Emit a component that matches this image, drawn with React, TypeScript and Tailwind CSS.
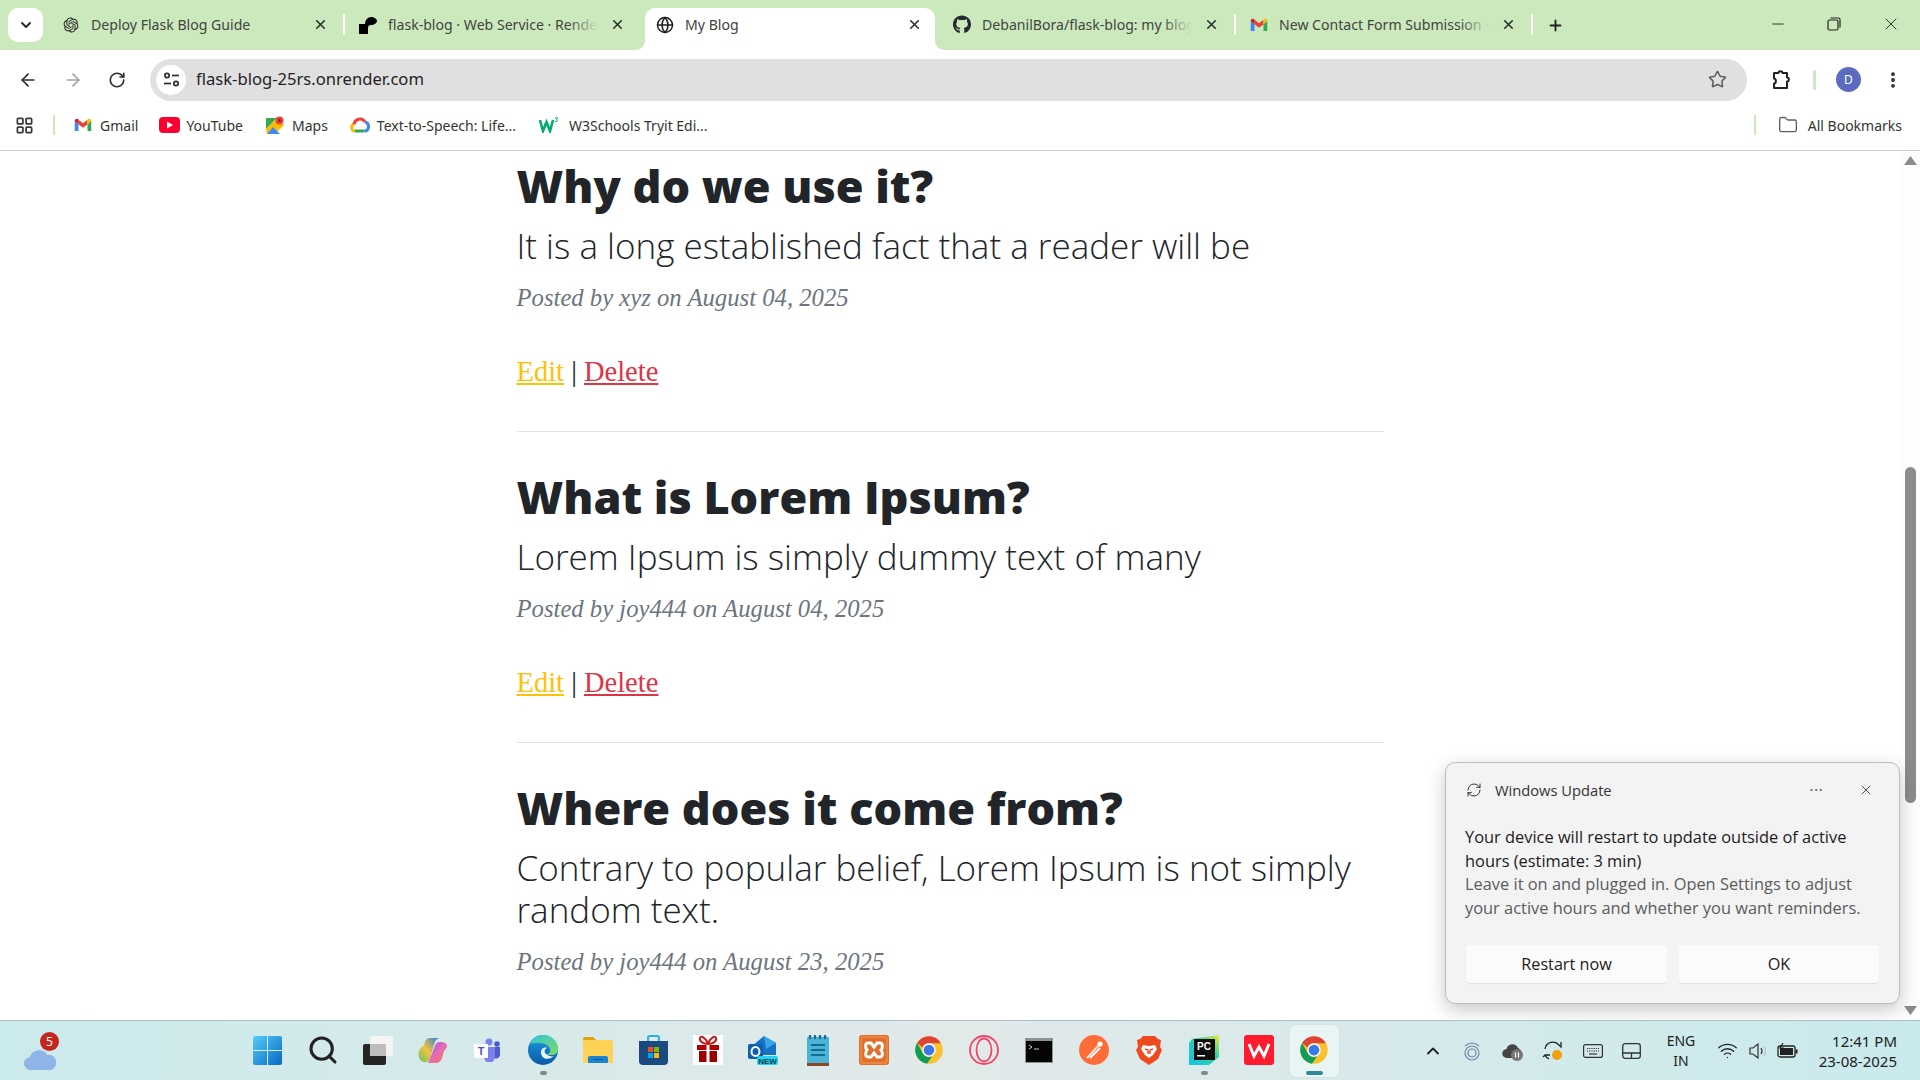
import React from "react";
import { FaGithub } from "react-icons/fa";
import { RiOpenaiFill } from "react-icons/ri";
import { ArrowLeft, ArrowRight, RotateCw, Star, MoreVertical, ChevronDown, ChevronUp, X, Plus, Minus, Globe, Folder, LayoutGrid, RefreshCw, Ellipsis, Search, Wifi } from "lucide-react";

const ui = "font-['Noto_Sans','Open_Sans',sans-serif]";

const Chrome = ({ s = 28 }: { s?: number }) => (
  <svg width={s} height={s} viewBox="0 0 24 24">
    <circle cx="12" cy="12" r="11" fill="#fbc02d" />
    <path d="M2.5 6.4A11 11 0 0 1 21.5 6.5H12A5.5 5.5 0 0 0 6.9 10Z" fill="#db4437" />
    <path d="M2.5 6.4L7.2 14.7A5.5 5.5 0 0 0 14.5 17L10.4 22.9A11 11 0 0 1 2.5 6.4Z" fill="#0f9d58" />
    <circle cx="12" cy="12" r="5.4" fill="#fff" />
    <circle cx="12" cy="12" r="4.3" fill="#3b78e7" />
  </svg>
);

const Gmail = ({ s = 18 }: { s?: number }) => (
  <svg width={s} height={s} viewBox="0 0 24 24">
    <path d="M1 6v14h5V11z" fill="#4285f4" />
    <path d="M23 6v14h-5V11z" fill="#34a853" />
    <path d="M6 11l6 4.5 6-4.5V5l-6 4.5L6 5z" fill="#ea4335" />
    <path d="M1 6.5C1 3.500 4.300 2.700 6 4.500V11z" fill="#c5221f" />
    <path d="M23 6.500C23 3.500 19.700 2.700 18 4.500V11z" fill="#fbbc04" />
  </svg>
);

const RenderIcon = () => (
  <svg width="18" height="18" viewBox="0 0 18 18">
    <path d="M0 18V8h6c0-4 3-7 6-7 3 0 6 2 6 4s-3 4-6 4c-2 0-3 1-3 3v6z" fill="#000" />
  </svg>
);

function Tab({ icon, title, active, sep, tone = "#41453e" }: { icon: React.ReactNode; title: string; active?: boolean; sep?: boolean; tone?: string }) {
  return (
    <div className="relative w-[297px] h-[42px] mt-[8px] flex items-center shrink-0 pb-[9px]">
      {active && (
        <>
          <div className="absolute left-[3px] right-[4px] top-0 bottom-0 bg-white rounded-t-[10px]" />
          <svg className="absolute left-[-7px] bottom-0" width="10" height="10" viewBox="0 0 10 10"><path d="M0 10C6 10 10 6 10 0V10Z" fill="#fff" /></svg>
          <svg className="absolute right-[-6px] bottom-0" width="10" height="10" viewBox="0 0 10 10"><path d="M10 10C4 10 0 6 0 0V10Z" fill="#fff" /></svg>
        </>
      )}
      <div className="relative ml-[14px] w-[18px] h-[18px] flex items-center justify-center shrink-0">{icon}</div>
      <div className="relative ml-[11px] w-[210px] overflow-hidden whitespace-nowrap text-[14.1px] leading-[20px]" style={{ color: tone }}>
        {title}
        {title.length > 27 && <div className="absolute right-0 top-0 h-full w-[30px] bg-gradient-to-r from-transparent to-[#cce9be]" />}
      </div>
      <X className="relative ml-[12px] text-[#2c2f2a]" size={15} strokeWidth={2.6} />
      {sep && <div className="absolute right-[0px] top-[6px] h-[21px] w-[2px] bg-white rounded" />}
    </div>
  );
}

function TitleBar() {
  return (
    <div className="h-[50px] bg-[#cce9be] flex items-start relative shrink-0">
      <div className="ml-[8px] mt-[8px] w-[35px] h-[34px] bg-white rounded-[10px] flex items-center justify-center">
        <ChevronDown size={16} strokeWidth={3} className="text-[#2c2f2a]" />
      </div>
      <div className="ml-[5px] flex">
        <Tab icon={<RiOpenaiFill size={20} className="text-[#222]" />} title="Deploy Flask Blog Guide" sep />
        <Tab icon={<RenderIcon />} title="flask-blog · Web Service · Render" />
        <Tab icon={<Globe size={18} className="text-[#1f1f1f]" />} title="My Blog" active tone="#3f423d" />
        <Tab icon={<FaGithub size={21} className="text-[#24292f]" />} title="DebanilBora/flask-blog: my blog" sep />
        <Tab icon={<Gmail />} title="New Contact Form Submission - Inbox" sep />
      </div>
      <Plus size={17} strokeWidth={2.6} className="ml-[14px] mt-[17px] text-[#222]" />
      <div className="ml-auto flex items-center h-[50px] pb-[2px]">
        <Minus size={18} strokeWidth={1.2} className="text-[#222] mr-[40px]" />
        <svg width="14" height="14" viewBox="0 0 14 14" className="mr-[40px]" fill="none" stroke="#222" strokeWidth="1.2"><rect x="1" y="3" width="10" height="10" rx="1.500" /><path d="M3.500 1h8a1.500 1.500 0 0 1 1.500 1.500v8" /></svg>
        <X size={20} strokeWidth={1.1} className="text-[#222] mr-[19px]" />
      </div>
    </div>
  );
}

function Toolbar() {
  return (
    <div className="h-[59px] bg-white rounded-t-[10px] flex items-center shrink-0 -mb-px relative">
      <div className="w-[150px] flex items-center shrink-0 pl-[18px] gap-[25px]">
        <ArrowLeft size={20} strokeWidth={2} className="text-[#2c2f2a]" />
        <ArrowRight size={20} strokeWidth={2} className="text-[#a3a5a2]" />
        <RotateCw size={18} strokeWidth={2.2} className="text-[#2c2f2a]" />
      </div>
      <div className="w-[1597px] h-[42px] rounded-full bg-[#e0e0e0] flex items-center shrink-0 pl-[6px] pr-[20px]">
        <div className="w-[30px] h-[30px] rounded-full bg-white flex items-center justify-center">
          <svg width="17" height="17" viewBox="0 0 17 17" fill="none" stroke="#2c2f2a" strokeWidth="1.700"><circle cx="4" cy="4.500" r="2.200" /><path d="M9 4.500h7" /><circle cx="13" cy="12.500" r="2.200" /><path d="M1 12.500h7" /></svg>
        </div>
        <span className="ml-[10px] text-[16.6px] text-[#1f2326]">flask-blog-25rs.onrender.com</span>
        <Star size={19} strokeWidth={2} className="ml-auto text-[#5f615e]" />
      </div>
      <svg width="20" height="20" viewBox="0 0 20 20" className="ml-[25px]" fill="none" stroke="#222" strokeWidth="2"><path d="M2 3h4.500c0-2.500 4-2.500 4 0H15v4.500c2.500 0 2.500 4 0 4V18H2v-4.500c2.500 0 2.500-5 0-5z" strokeLinejoin="round" /></svg>
      <div className="ml-[21px] w-[3px] h-[20px] bg-[#cce9be] rounded" />
      <div className="ml-[20px] w-[25px] h-[25px] rounded-full bg-[#5c6bc0] text-white text-[12px] flex items-center justify-center">D</div>
      <MoreVertical size={20} strokeWidth={2.6} className="ml-[22px] text-[#2c2f2a]" />
    </div>
  );
}

const Bookmark = ({ icon, label, ml, gap }: { icon: React.ReactNode; label: string; ml: number; gap: number }) => (
  <div className="flex items-center" style={{ marginLeft: ml }}>
    {icon}
    <span className="text-[14px] text-[#33362f] whitespace-nowrap" style={{ marginLeft: gap }}>{label}</span>
  </div>
);

function BookmarksBar() {
  return (
    <div className="h-[43px] bg-white border-b border-[#d0d0d0] flex items-center shrink-0 relative pl-[15px] pb-[8px]">
      <LayoutGrid size={19} strokeWidth={2.2} className="text-[#3a3a3a]" />
      <div className="ml-[19px] w-[2px] h-[20px] bg-[#cce9be]" />
      <Bookmark ml={19} gap={8} label="Gmail" icon={<Gmail />} />
      <Bookmark ml={21} gap={6} label="YouTube" icon={
        <svg width="21" height="16" viewBox="0 0 21 16"><rect width="21" height="16" rx="4" fill="#ff0033" /><path d="M8 4.500l6 3.500-6 3.500z" fill="#fff" /></svg>} />
      <Bookmark ml={23} gap={8} label="Maps" icon={
        <svg width="18" height="18" viewBox="0 0 18 18"><path d="M0 2h11L0 13z" fill="#34a853" /><path d="M0 13L11 2l7 7v0L9 18H1z" fill="#fbbc04" /><path d="M1 18l6-7 7 7z" fill="#4285f4" /><circle cx="13.500" cy="4.500" r="4" fill="#ea4335" /><circle cx="13.500" cy="4.500" r="1.500" fill="#8e1c14" /></svg>} />
      <Bookmark ml={22} gap={7} label="Text-to-Speech: Life..." icon={
        <svg width="20" height="16" viewBox="0 0 20 16" fill="none" strokeWidth="3"><path d="M5 14a3.500 3.500 0 0 1-1-6.800" stroke="#fbbc04" /><path d="M4 7.200C5 2 12 0 15 5" stroke="#ea4335" /><path d="M15 5c5 1 4.500 9-.5 9" stroke="#4285f4" /><path d="M5 14h9.500" stroke="#34a853" /></svg>} />
      <Bookmark ml={23} gap={10} label="W3Schools Tryit Edi..." icon={
        <svg width="20" height="16" viewBox="0 0 20 16" fill="none" stroke="#04aa6d" strokeWidth="2.600"><path d="M1 3l3 11 3.500-9L11 14l3-11" /><path d="M16 1h3l-1.500 1.500q1.500.5 0 2H16" strokeWidth="1" /></svg>} />
      <div className="ml-auto flex items-center pr-[18px]">
        <div className="w-[2px] h-[20px] bg-[#cce9be] mr-[22px]" />
        <Folder size={20} strokeWidth={1.6} className="text-[#5f615e]" />
        <span className="ml-[10px] text-[14px] text-[#33362f] whitespace-nowrap">All Bookmarks</span>
      </div>
    </div>
  );
}

function Post({ title, text, by, last }: { title: string; text: string; by: string; last?: boolean }) {
  return (
    <article className={last ? "" : "mb-[38px]"}>
      <h2 className="font-['Open_Sans',sans-serif] font-extrabold text-[45px] leading-[54px] text-[#212529]">{title}</h2>
      <p className="mt-[12px] font-['Open_Sans',sans-serif] font-light text-[35px] leading-[42px] text-[#212529]">{text}</p>
      <p className="mt-[14px] font-['Liberation_Serif',serif] italic text-[24.7px] leading-[34px] text-[#6c757d]">{by}</p>
      <div className="mt-[40px] font-['Liberation_Serif',serif] text-[28.5px] leading-[34px] text-[#212529]">
        <a className="text-[#ffc107] underline">Edit</a> | <a className="text-[#dc3545] underline">Delete</a>
      </div>
      {!last && <hr className="mt-[42px] border-t border-[#dfe1e3]" />}
    </article>
  );
}

function Page() {
  return (
    <div className="flex-1 min-h-0 flex bg-white relative overflow-hidden">
      <main className="flex-1 min-w-0 overflow-hidden pt-[8px]">
        <div className="w-[867px] mx-auto">
          <Post title="Why do we use it?" text="It is a long established fact that a reader will be" by="Posted by xyz on August 04, 2025" />
          <Post title="What is Lorem Ipsum?" text="Lorem Ipsum is simply dummy text of many" by="Posted by joy444 on August 04, 2025" />
          <Post last title="Where does it come from?" text="Contrary to popular belief, Lorem Ipsum is not simply random text." by="Posted by joy444 on August 23, 2025" />
        </div>
      </main>
      <div className="w-[20px] shrink-0 bg-[#fdfdfd] flex flex-col items-center pt-[5px] pb-[5px]">
        <svg width="13" height="9" viewBox="0 0 13 9"><path d="M6.500 0L13 9H0z" fill="#8b8b8b" /></svg>
        <div className="mt-[302px] w-[11px] h-[336px] rounded-full bg-[#8b8b8b]" />
        <svg className="mt-auto" width="13" height="9" viewBox="0 0 13 9"><path d="M6.500 9L13 0H0z" fill="#8b8b8b" /></svg>
      </div>
      <Toast />
    </div>
  );
}

function Toast() {
  return (
    <div className="absolute left-[1445px] top-[611px] w-[455px] h-[242px] bg-[#f3f3f3] border border-[#bdbdbd] rounded-[10px] shadow-[0_6px_18px_rgba(0,0,0,0.22)] px-[20px] font-['Open_Sans',sans-serif]">
      <div className="flex items-center h-[26px] mt-[14px]">
        <RefreshCw size={16} strokeWidth={1.5} className="text-[#333]" />
        <span className="ml-[13px] text-[14.7px] text-[#333]">Windows Update</span>
        <Ellipsis size={16} strokeWidth={1.2} className="ml-auto text-[#555]" />
        <X size={16} strokeWidth={1.3} className="ml-[34px] mr-[5px] text-[#333]" />
      </div>
      <div className="mt-[22px] -ml-px text-[16.4px] leading-[23.700px] text-[#1c1c1c]">
        <div className="whitespace-nowrap">Your device will restart to update outside of active</div>
        <div>hours (estimate: 3 min)</div>
        <div className="text-[#5c5c5c] whitespace-nowrap">Leave it on and plugged in. Open Settings to adjust</div>
        <div className="text-[#5c5c5c] whitespace-nowrap">your active hours and whether you want reminders.</div>
      </div>
      <div className="mt-[25px] flex gap-[12px]">
        <div className="w-[201px] h-[38px] rounded-[4px] bg-[#fbfbfb] shadow-[0_1px_1px_rgba(0,0,0,0.08)] flex items-center justify-center text-[16.2px] text-[#1c1c1c]">Restart now</div>
        <div className="w-[200px] h-[38px] rounded-[4px] bg-[#fbfbfb] shadow-[0_1px_1px_rgba(0,0,0,0.08)] flex items-center justify-center text-[16.2px] text-[#1c1c1c]">OK</div>
      </div>
    </div>
  );
}

const Slot = ({ children, dot, active }: { children: React.ReactNode; dot?: boolean; active?: boolean }) => (
  <div className="relative w-[55.1px] h-[52px] pb-[1px] flex items-center justify-center shrink-0">
    {active && <div className="absolute top-0 bottom-0 w-[49px] rounded-[5px] bg-[#e9f4f5] shadow-[0_0_1px_rgba(0,0,0,0.2)]" />}
    <div className="relative flex">{children}</div>
    {dot && <div className="absolute bottom-[2px] w-[7px] h-[4px] rounded-full bg-[#7e8b8c]" />}
    {active && <div className="absolute bottom-[2px] w-[17px] h-[4px] rounded-full bg-[#2a8a9a]" />}
  </div>
);

const icons = {
  start: (
    <svg width="29" height="29" viewBox="0 0 29 29"><defs><linearGradient id="w" x1="0" y1="0" x2="1" y2="1"><stop offset="0" stopColor="#56ccf8" /><stop offset="1" stopColor="#0668c4" /></linearGradient></defs><rect width="29" height="29" rx="2" fill="url(#w)" /><path d="M14.500 0v29M0 14.500h29" stroke="#d8f0f4" strokeWidth="1" /></svg>
  ),
  search: <Search size={32} strokeWidth={2.300} className="text-[#222]" />,
  task: (
    <svg width="30" height="29" viewBox="0 0 30 29"><rect x="0" y="8" width="23" height="21" rx="2" fill="#252525" /><rect x="7" y="0" width="23" height="20" rx="2" fill="#f4f4f4" /><rect x="7" y="8" width="16" height="12" fill="#bdbdbd" /></svg>
  ),
  copilot: (
    <svg width="29" height="29" viewBox="0 0 29 29"><defs><linearGradient id="c1" x1="0" y1="1" x2="1" y2="0"><stop offset="0" stopColor="#5ec46a" /><stop offset=".45" stopColor="#f2c43c" /><stop offset="1" stopColor="#2a7ce8" /></linearGradient><linearGradient id="c2" x1="0" y1="0" x2="1" y2="1"><stop offset="0" stopColor="#8a5ae6" /><stop offset=".5" stopColor="#e76bb4" /><stop offset="1" stopColor="#f47b3c" /></linearGradient></defs><path d="M11 2h10c-3 1-4 3-5 7l-4 13c-1 3-3 5-6 4-5-1-6-7-5-11 1-3 4-5 5-6q1-6 5-7z" fill="url(#c1)" /><path d="M10 27h9q4-1 5-5l2-7c2-3 3-3 3-5 0-3-3-4-7-4-3 0-4 1-5 4z" fill="url(#c2)" /></svg>
  ),
  teams: (
    <svg width="27" height="24" viewBox="0 0 27 24"><circle cx="15" cy="4" r="3.500" fill="#7b83eb" /><circle cx="23" cy="6" r="2.800" fill="#5059c9" /><path d="M19 9h7v8a4 4 0 0 1-6 3z" fill="#5059c9" /><path d="M9 9h12v10a5.500 5.500 0 0 1-11 0z" fill="#7b83eb" /><rect x="0" y="6" width="14" height="14" fill="#fff" /><text x="7" y="17" textAnchor="middle" fontFamily="Liberation Sans" fontWeight="700" fontSize="11" fill="#4b53bc">T</text></svg>
  ),
  edge: (
    <svg width="30" height="30" viewBox="0 0 30 30"><defs><linearGradient id="e1" x1="0" y1="0" x2="1" y2="1"><stop offset="0" stopColor="#2fc4d8" /><stop offset="1" stopColor="#7fdc64" /></linearGradient><linearGradient id="e2" x1="0" y1="0" x2="0" y2="1"><stop offset="0" stopColor="#1b9de2" /><stop offset="1" stopColor="#0a5aa8" /></linearGradient></defs><circle cx="15" cy="15" r="15" fill="url(#e2)" /><path d="M2 9C5 2 11 0 15 0c8 0 15 6 15 14 0 4-3 6-6 6h-6c3-1 5-3 4-6-1-4-6-6-11-6-4 0-7 0-9 1z" fill="url(#e1)" /><path d="M26 21c-2 2-7 4-10 2-3-2-4-6-2-9 1-1 4-2 5-1-3 1-3 4-1 6s6 3 8 2z" fill="#e8f4f6" /></svg>
  ),
  folder: (
    <svg width="30" height="26" viewBox="0 0 30 26"><path d="M0 2a2 2 0 0 1 2-2h8l3 3v3H0z" fill="#e3a20a" /><rect y="3" width="30" height="23" rx="1" fill="#fdd256" /><path d="M5 26v-5a2 2 0 0 1 2-2h16a2 2 0 0 1 2 2v5z" fill="#1b84d0" /><rect x="10" y="22" width="10" height="1" fill="#0b4d8c" /></svg>
  ),
  store: (
    <svg width="29" height="30" viewBox="0 0 29 30"><path d="M9 6V3a2 2 0 0 1 2-2h7a2 2 0 0 1 2 2v3" fill="none" stroke="#28b0e8" strokeWidth="2" /><path d="M0 6h29v20a4 4 0 0 1-4 4H4a4 4 0 0 1-4-4z" fill="#1a4a80" /><rect x="9" y="12" width="5" height="5" fill="#f25022" /><rect x="15" y="12" width="5" height="5" fill="#7fba00" /><rect x="9" y="18" width="5" height="5" fill="#00a4ef" /><rect x="15" y="18" width="5" height="5" fill="#ffb900" /></svg>
  ),
  gift: (
    <svg width="30" height="30" viewBox="0 0 30 30"><rect width="30" height="30" fill="#fff" /><path d="M15 9C10 9 6 6 7 3s6 0 8 6c2-6 7-9 8-6s-3 6-8 6z" fill="none" stroke="#c81e1e" strokeWidth="2" /><rect x="4" y="10" width="22" height="5" fill="#b00000" /><rect x="6" y="16" width="18" height="11" fill="#9e0000" /><rect x="13.500" y="10" width="3" height="17" fill="#fff" /></svg>
  ),
  outlook: (
    <svg width="30" height="30" viewBox="0 0 30 30"><path d="M4 11L16 1l12 7v12H4z" fill="#1572c4" /><path d="M16 1l12 7-10 6z" fill="#39a6e8" /><rect y="9" width="15" height="15" rx="2" fill="#0f5fb0" /><ellipse cx="7.500" cy="16.500" rx="4" ry="4.500" fill="none" stroke="#fff" strokeWidth="2" /><rect x="9" y="21" width="21" height="9" rx="2" fill="#22d3ee" /><text x="19.500" y="29" textAnchor="middle" fontFamily="Liberation Sans" fontWeight="700" fontSize="8" fill="#063a52">NEW</text></svg>
  ),
  notes: (
    <svg width="22" height="31" viewBox="0 0 22 31"><rect y="2" width="22" height="27" rx="1" fill="#4ab4d8" /><rect y="28" width="22" height="3" fill="#8c4a20" /><path d="M3 1v2M8 1v2M13 1v2M18 1v2" stroke="#1d6a88" strokeWidth="2.400" strokeLinecap="round" /><path d="M4 10h14M4 15h14M4 20h14" stroke="#146a90" strokeWidth="2" /></svg>
  ),
  xampp: (
    <svg width="30" height="30" viewBox="0 0 30 30"><rect width="30" height="30" rx="3" fill="#e0702a" /><rect x="2" y="2" width="26" height="26" rx="2" fill="none" stroke="#f49a5a" strokeWidth="1" /><path d="M9 8h3l3 4 3-4h3c3 0 3 5 1 7 2 2 2 7-1 7h-3l-3-4-3 4H9c-3 0-3-5-1-7-2-2-2-7 1-7z" fill="none" stroke="#fff" strokeWidth="3" /></svg>
  ),
  opera: (
    <svg width="30" height="30" viewBox="0 0 30 30" fill="none" stroke="#f0476a" strokeWidth="1.800"><circle cx="15" cy="15" r="14" /><ellipse cx="15" cy="15" rx="7.500" ry="11.500" /></svg>
  ),
  cmd: (
    <svg width="28" height="25" viewBox="0 0 28 25"><rect width="28" height="25" fill="#8e9295" /><rect x="1" y="3" width="26" height="21" fill="#050505" /><path d="M4 7l3 2-3 2M9 11h5" stroke="#ccc" strokeWidth="1" fill="none" /></svg>
  ),
  postman: (
    <svg width="30" height="30" viewBox="0 0 30 30"><circle cx="15" cy="15" r="15" fill="#ff6c37" /><path d="M8 23L19 11M11 23l10-10" stroke="#fff" strokeWidth="1.800" fill="none" /><circle cx="21" cy="9" r="2.600" fill="#fff" /></svg>
  ),
  brave: (
    <svg width="26" height="30" viewBox="0 0 26 30"><path d="M7 1h12l3 3 3 1-1 7 2 3-4 9-9 6-9-6-4-9 2-3-1-7 3-1z" fill="#ee4a1d" /><path d="M7 10l6 1 6-1 2 4-4 6-4 3-4-3-4-6z" fill="#fff" /><path d="M9 14l3 1v3h2v-3l3-1" stroke="#ee4a1d" strokeWidth="1.400" fill="none" /></svg>
  ),
  pycharm: (
    <svg width="30" height="30" viewBox="0 0 30 30"><defs><linearGradient id="p" x1="0" y1="1" x2="1" y2="0"><stop offset="0" stopColor="#18c0ee" /><stop offset=".6" stopColor="#2ed3a0" /><stop offset="1" stopColor="#f3e63c" /></linearGradient></defs><path d="M3 4L30 0v22L20 30H0V8z" fill="url(#p)" /><rect x="5" y="4" width="21" height="21" fill="#0b0b0b" /><text x="8" y="15" fontFamily="Liberation Sans" fontWeight="700" fontSize="10" fill="#fff">PC</text><rect x="8" y="20" width="8" height="1.500" fill="#fff" /></svg>
  ),
  wps: (
    <svg width="30" height="30" viewBox="0 0 30 30"><rect width="30" height="30" rx="3" fill="#ff1b2d" /><path d="M5 9l5 12 5-9 5 9 5-12" fill="none" stroke="#fff" strokeWidth="3" /></svg>
  ),
};

function Taskbar() {
  return (
    <footer className="h-[60px] shrink-0 border-t border-[#a9c0c4] bg-gradient-to-r from-[#cbeaec] via-[#e2e9e9] to-[#c9eaed] flex items-center relative z-10">
      <div className="absolute left-[24px] top-[12px]">
        <svg width="34" height="24" viewBox="0 0 34 24" className="mt-[13px]"><path d="M7 24a6.500 6.500 0 0 1-1-13c2-8 14-9 17-2 6-1 10 4 9 9-1 4-3 6-7 6z" fill="#8fb5e8" /></svg>
        <div className="absolute left-[16px] top-[-1px] w-[19px] h-[19px] rounded-full bg-[#c4261d] text-white text-[12px] flex items-center justify-center">5</div>
      </div>
      <div className="ml-[240px] flex items-center">
        <Slot>{icons.start}</Slot>
        <Slot>{icons.search}</Slot>
        <Slot>{icons.task}</Slot>
        <Slot>{icons.copilot}</Slot>
        <Slot>{icons.teams}</Slot>
        <Slot dot>{icons.edge}</Slot>
        <Slot>{icons.folder}</Slot>
        <Slot>{icons.store}</Slot>
        <Slot>{icons.gift}</Slot>
        <Slot>{icons.outlook}</Slot>
        <Slot>{icons.notes}</Slot>
        <Slot>{icons.xampp}</Slot>
        <Slot><Chrome s={30} /></Slot>
        <Slot>{icons.opera}</Slot>
        <Slot>{icons.cmd}</Slot>
        <Slot>{icons.postman}</Slot>
        <Slot>{icons.brave}</Slot>
        <Slot dot>{icons.pycharm}</Slot>
        <Slot>{icons.wps}</Slot>
        <Slot active><Chrome s={30} /></Slot>
      </div>
      <div className="absolute left-[1423px] top-0 h-full flex items-center text-[#222]">
        <ChevronUp size={20} strokeWidth={2.200} />
        <svg width="18" height="20" viewBox="0 0 18 20" fill="none" stroke="#6f87a8" strokeWidth="1.200" className="ml-[20px]"><circle cx="9" cy="12" r="7" /><circle cx="9" cy="12" r="4" /><path d="M2 5q7-6 14 0" /></svg>
        <svg width="22" height="20" viewBox="0 0 22 20" className="ml-[21px]"><path d="M5 17a4.500 4.500 0 0 1-.5-9C6 2 14 2 16 7q3 1 3 4H12v6z" fill="#444" /><circle cx="15" cy="14" r="6" fill="#777" /><path d="M13.500 11.500v5M16.500 11.500v5" stroke="#fff" strokeWidth="1.200" /></svg>
        <svg width="22" height="22" viewBox="0 0 22 22" fill="none" stroke="#222" strokeWidth="1.300" className="ml-[18px]"><path d="M3 9a8 8 0 0 1 14-4l2 2V2" /><path d="M7 19a8 8 0 0 1-4-4l-2 2M3 15h5" /><circle cx="15" cy="15" r="5" fill="#f59e0b" stroke="none" /></svg>
        <svg width="20" height="14" viewBox="0 0 20 14" fill="none" stroke="#333" strokeWidth="1.200" className="ml-[19px]"><rect x=".6" y=".6" width="18.800" height="12.800" rx="2" /><path d="M4 4.500h12M4 7h12" strokeDasharray="1.200 1" /><path d="M6 10h8" /></svg>
        <svg width="19" height="16" viewBox="0 0 19 16" fill="none" stroke="#333" strokeWidth="1.300" className="ml-[19px]"><rect x=".7" y=".7" width="17.600" height="14.600" rx="2.500" /><path d="M1 10h17M9.500 10v5" /></svg>
      </div>
      <div className="absolute left-[1660px] top-0 h-full w-[42px] flex flex-col justify-center items-center text-[14px] leading-[20px] text-[#222]">
        <span>ENG</span><span>IN</span>
      </div>
      <div className="absolute left-[1717px] top-0 h-full flex items-center text-[#222]">
        <Wifi size={21} strokeWidth={1.500} />
        <svg width="22" height="16" viewBox="0 0 22 16" fill="none" stroke="#333" strokeWidth="1.200" className="ml-[11px]"><path d="M1 5h3l5-4v14l-5-4H1z" /><path d="M12 5q2 3 0 6" /><path d="M15 3q3 5 0 10" stroke="#b5c5c8" /></svg>
        <svg width="21" height="16" viewBox="0 0 21 16" className="ml-[6px]"><rect x="1" y="3" width="17" height="11" rx="2" fill="none" stroke="#222" strokeWidth="1.300" /><rect x="3" y="5" width="13" height="7" fill="#222" /><rect x="18.500" y="6.500" width="2" height="4" fill="#222" /><path d="M6 0L3 5h3L4 8" fill="none" stroke="#222" strokeWidth="1.200" /></svg>
      </div>
      <div className="absolute right-[23px] top-0 h-full flex flex-col justify-center items-end text-[15px] leading-[20px] text-[#222]">
        <span>12:41 PM</span><span>23-08-2025</span>
      </div>
    </footer>
  );
}

export default function App() {
  return (
    <div className={`w-[1920px] h-[1080px] flex flex-col overflow-hidden ${ui}`}>
      <TitleBar />
      <Toolbar />
      <BookmarksBar />
      <Page />
      <Taskbar />
    </div>
  );
}
